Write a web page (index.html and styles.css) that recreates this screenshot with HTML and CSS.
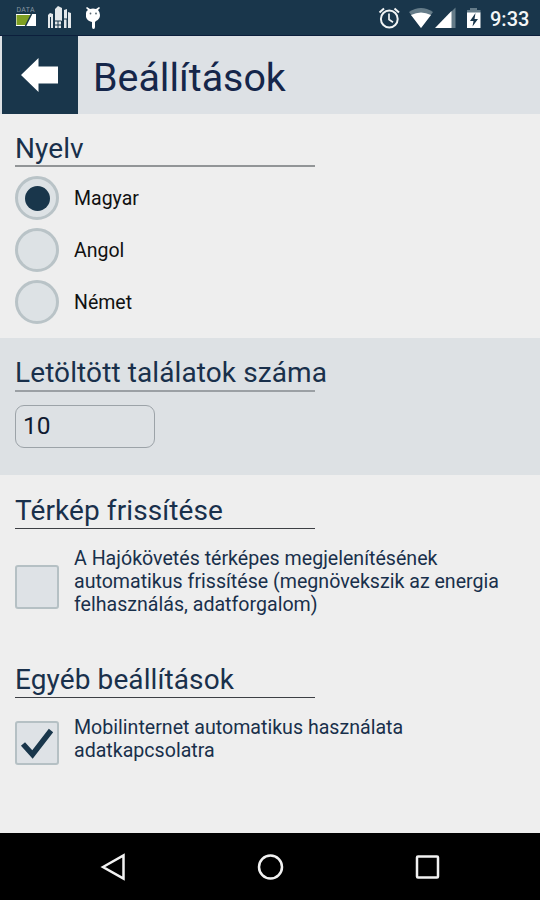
FILE: index.html
```html
<!DOCTYPE html>
<html lang="hu">

<head>
    <meta charset="UTF-8">
    <meta name="viewport" content="width=device-width, initial-scale=1.0">
    <title>Beállítások</title>
    <link rel="stylesheet" href="styles.css">
</head>

<body>
    <div class="statusbar">
        <svg class="status-left" width="110" height="35" viewBox="0 0 110 35">
            <text class="data" x="16.5" y="12" textLength="18">DATA</text>
            <path fill="#fff" d="M16 14h20v12H16z" />
            <path fill="#7f9f22" d="M16.500 15h15L26 25h-9.500z" />
            <path stroke="#19364b" stroke-width="1.500" d="M31.500 14L25.500 26" />
            <path fill="#e4e8eb" d="M48 15l2-2 3 1v14h-5zM55 9l3-3 4 2v20h-7zM64 10l3-1v19h-3zM68 12l3 1v15h-3z" />
            <path fill="none" stroke="#19364b" d="M50.500 17v11M54.500 21h7v7M58 21v7M62 19h5v9M55 25h9" />
            <path fill="#fff" d="M86 13q0-2 2-3l-2-2 1-1 3 2q3-1 6 0l3-2 1 1-2 2q2 2 2 5 0 4-4 6l-1 1v5q0 2-1.500 2T92 27v-5q-5-1-6-5z" />
            <circle cx="90.500" cy="13.500" r="0.900" fill="#55656f" />
            <circle cx="96" cy="13.500" r="0.900" fill="#55656f" />
        </svg>
        <svg class="status-right" width="112" height="35" viewBox="376 0 112 35">
            <g fill="none" stroke="#f1f4f5" stroke-width="2">
                <circle cx="389.300" cy="19" r="8.400" />
                <path d="M379.500 12.500l4.500-4M399 12.500l-4.500-4" />
                <path stroke-width="1.700" d="M389 13.500v6l4 2.700" />
            </g>
            <path fill="#657c89" d="M409 12q12-8 24 0l-12 16z" />
            <path fill="#fff" d="M411 15q10-5 20 0L421 28z" />
            <path fill="#657c89" d="M451 12l4.500-4.500V28H451z" />
            <path fill="#fff" d="M435 28l16.500-17v17z" />
            <path fill="#657c89" d="M467 13V10h3V8h7v2h3.500v3z" />
            <path fill="#fff" d="M467 12.500h13.500V28H467z" />
            <path fill="#19364b" d="M475.500 13l-5.500 8h3.500l-1 5.500 5.500-7.500h-3.500z" />
        </svg>
        <span class="clock">9:33</span>
    </div>

    <div class="header">
        <a href="#" class="back" aria-label="Vissza">
            <svg width="37" height="34" viewBox="0 0 37 34">
                <path fill="#fff" d="M0 17L17.500 0v8.500H37v17H17.500V34z" />
            </svg>
        </a>
        <h1>Beállítások</h1>
    </div>

    <div class="section language">
        <h2>Nyelv</h2>
        <div class="option"><span class="radio checked"></span><span>Magyar</span></div>
        <div class="option"><span class="radio"></span><span>Angol</span></div>
        <div class="option"><span class="radio"></span><span>Német</span></div>
    </div>

    <div class="section results">
        <h2>Letöltött találatok száma</h2>
        <div class="number">10</div>
    </div>

    <div class="section map">
        <h2>Térkép frissítése</h2>
        <div class="row">
            <span class="checkbox"></span>
            <p>A Hajókövetés térképes megjelenítésének<br>automatikus frissítése (megnövekszik az energia<br>felhasználás, adatforgalom)</p>
        </div>
    </div>

    <div class="section other">
        <h2>Egyéb beállítások</h2>
        <div class="row">
            <span class="checkbox">
                <svg width="34" height="34" viewBox="0 0 34 34">
                    <path fill="none" stroke="#19364b" stroke-width="5.500" d="M3 18l9.500 10.500L31 4.500" />
                </svg>
            </span>
            <p>Mobilinternet automatikus használata<br>adatkapcsolatra</p>
        </div>
    </div>

    <div class="navbar">
        <svg width="28" height="28" viewBox="0 0 28 28"><path d="M4 14L24.500 2.500v23z" /></svg>
        <svg width="28" height="28" viewBox="0 0 28 28"><circle cx="14.500" cy="14" r="11.500" /></svg>
        <svg width="28" height="28" viewBox="0 0 28 28"><rect x="4" y="3.500" width="21" height="21" rx="1" /></svg>
    </div>
</body>

</html>
```

FILE: styles.css
```css
* {
    padding: 0;
    margin: 0;
    box-sizing: border-box;
}

body {
    display: flex;
    flex-direction: column;
    height: 900px;
    background: #eee;
    font-family: Roboto, "Liberation Sans", sans-serif;
    color: #19304b;
    overflow: hidden;
}

svg {
    display: block;
}

.statusbar {
    display: flex;
    height: 36px;
    background: #19364b;
    border-bottom: 1px solid #0c1f3c;
}

.status-right {
    margin-left: auto;
}

.data {
    font-size: 7px;
    fill: #8797a1;
}

.clock {
    width: 52px;
    padding-left: 2px;
    font-size: 20px;
    font-weight: 500;
    line-height: 38px;
    color: #f4f6f7;
}

.header {
    display: flex;
    height: 78px;
    padding-left: 2px;
    background: #dde1e5;
}

.back {
    display: flex;
    align-items: center;
    width: 76px;
    padding-left: 19px;
    background: #19364b;
}

h1 {
    padding-left: 15px;
    font-size: 39.4px;
    font-weight: 400;
    line-height: 83px;
    color: #15264a;
}

.section {
    padding: 20px 15px 0;
}

h2 {
    width: 300px;
    height: 34px;
    margin-bottom: 9px;
    border-bottom: 1px solid #3c3f44;
    font-size: 28px;
    font-weight: 400;
    letter-spacing: 0.1px;
    line-height: 32px;
    white-space: nowrap;
}

.language {
    height: 224px;
    padding-top: 19px;
}

.language h2 {
    border-bottom: 2px solid #929597;
}

.option {
    display: flex;
    align-items: center;
    gap: 15px;
    height: 44px;
    margin-bottom: 8px;
    font-size: 19.5px;
    color: #111;
}

.radio {
    display: flex;
    align-items: center;
    justify-content: center;
    width: 44px;
    height: 44px;
    border: 3px solid #b9c3c7;
    border-radius: 50%;
    background: #dde2e5;
}

.checked::before {
    content: "";
    width: 25px;
    height: 25px;
    border-radius: 50%;
    background: #19364b;
}

.results {
    height: 137px;
    padding-top: 19px;
    background: #dde1e4;
}

.results h2 {
    height: 35px;
    margin-bottom: 13px;
    border-bottom: 2px solid #9ba0a4;
}

.number {
    width: 140px;
    height: 43px;
    padding-left: 7px;
    border: 1px solid #9ca3a8;
    border-radius: 9px;
    font-size: 24.5px;
    line-height: 39px;
    color: #101b30;
}

.map {
    height: 169px;
}

.row {
    display: flex;
    align-items: center;
    gap: 15px;
    font-size: 19.6px;
    line-height: 23px;
    white-space: nowrap;
}

.map .row {
    padding-top: 9px;
}

.checkbox {
    display: flex;
    align-items: center;
    justify-content: center;
    flex: none;
    width: 44px;
    height: 44px;
    margin-top: 11px;
    border: 2px solid #b5c0c4;
    border-radius: 3px;
    background: #dee2e6;
}

.other .checkbox {
    margin-top: 14px;
}

.other p {
    margin-top: 6px;
}

.navbar {
    display: flex;
    align-items: center;
    justify-content: space-between;
    height: 67px;
    margin-top: auto;
    padding: 0 99px;
    background: #000;
}

.navbar svg {
    fill: none;
    stroke: #f2f2f2;
    stroke-width: 2.5;
}
```
